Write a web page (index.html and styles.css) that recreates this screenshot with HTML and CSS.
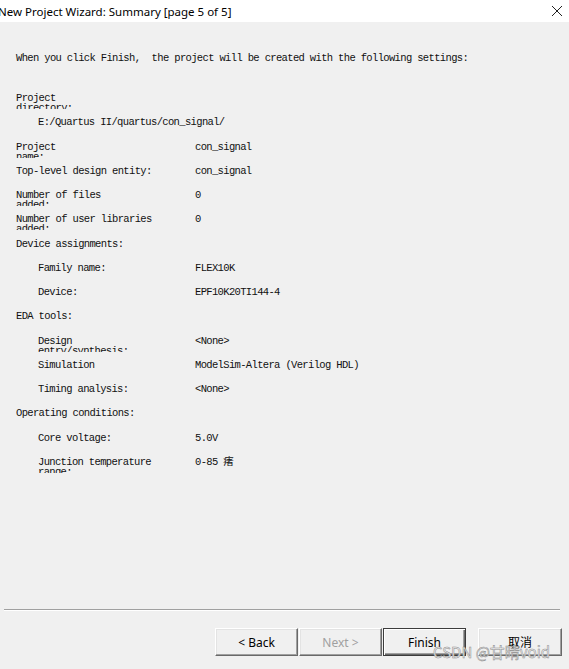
FILE: index.html
```html
<!DOCTYPE html>
<html lang="en">
<head>
    <meta charset="UTF-8">
    <meta name="viewport" content="width=device-width, initial-scale=1.0">
    <title>New Project Wizard: Summary</title>
    <link rel="stylesheet" href="styles.css">
</head>
<body>
    <div class="window">
        <header class="titlebar">
            <span class="title">New Project Wizard: Summary [page 5 of 5]</span>
            <svg class="close" width="12" height="12" viewBox="0 0 12 12">
                <path d="M1 1 L11 11 M11 1 L1 11" stroke="#222" stroke-width="1" fill="none"/>
            </svg>
        </header>

        <div class="content">
            <p class="intro">When you click Finish,  the project will be created with the following settings:</p>

            <div class="summary">
                <div class="row">
                    <div class="label">Project<br>directory:</div>
                </div>
                <div class="row sub">
                    <div class="label wide">E:/Quartus II/quartus/con_signal/</div>
                </div>
                <div class="row">
                    <div class="label">Project<br>name:</div>
                    <div class="value">con_signal</div>
                </div>
                <div class="row">
                    <div class="label">Top-level design entity:</div>
                    <div class="value">con_signal</div>
                </div>
                <div class="row">
                    <div class="label">Number of files<br>added:</div>
                    <div class="value">0</div>
                </div>
                <div class="row">
                    <div class="label">Number of user libraries<br>added:</div>
                    <div class="value">0</div>
                </div>
                <div class="row">
                    <div class="label wide">Device assignments:</div>
                </div>
                <div class="row sub">
                    <div class="label">Family name:</div>
                    <div class="value">FLEX10K</div>
                </div>
                <div class="row sub">
                    <div class="label">Device:</div>
                    <div class="value">EPF10K20TI144-4</div>
                </div>
                <div class="row">
                    <div class="label wide">EDA tools:</div>
                </div>
                <div class="row sub">
                    <div class="label">Design<br>entry/synthesis:</div>
                    <div class="value">&lt;None&gt;</div>
                </div>
                <div class="row sub">
                    <div class="label">Simulation</div>
                    <div class="value">ModelSim-Altera (Verilog HDL)</div>
                </div>
                <div class="row sub">
                    <div class="label">Timing analysis:</div>
                    <div class="value">&lt;None&gt;</div>
                </div>
                <div class="row">
                    <div class="label wide">Operating conditions:</div>
                </div>
                <div class="row sub">
                    <div class="label">Core voltage:</div>
                    <div class="value">5.0V</div>
                </div>
                <div class="row sub">
                    <div class="label">Junction temperature<br>range:</div>
                    <div class="value">0-85 瘏</div>
                </div>
            </div>
        </div>

        <footer class="footer">
            <div class="separator"></div>
            <div class="buttons">
                <button class="btn">&lt; Back</button>
                <button class="btn" disabled>Next &gt;</button>
                <button class="btn default">Finish</button>
                <button class="btn cancel">取消</button>
            </div>
            <span class="watermark">CSDN @甘晴void</span>
        </footer>
    </div>
</body>
</html>
```

FILE: styles.css
```css
body {
    margin: 0;
    padding: 0;
    background: #f0f0f0;
    font-family: "Noto Sans", "Noto Sans CJK SC", sans-serif;
    color: #000;
}

.window {
    width: 569px;
    height: 669px;
    overflow: hidden;
    position: relative;
}

.titlebar {
    height: 22px;
    background: #fff;
    display: flex;
    align-items: center;
    justify-content: space-between;
    padding-right: 6px;
}

.title {
    font-size: 11.5px;
    margin-left: -2px;
    color: #000;
}

.close {
    display: block;
    margin-top: -1px;
}

.content {
    height: 587px;
    font-family: "Liberation Mono", "Noto Sans CJK SC", monospace;
    font-size: 10.5px;
    letter-spacing: -0.65px;
    color: #111;
}

.intro {
    margin: 0;
    padding: 31px 0 0 16px;
    line-height: 10px;
    white-space: pre;
}

.summary {
    margin-top: 30px;
    padding-left: 16px;
}

.row {
    display: flex;
    height: 24.27px;
    line-height: 10px;
}

.label {
    width: 179px;
    height: 16px;
    overflow: hidden;
    flex-shrink: 0;
    box-sizing: border-box;
}

.label.wide {
    width: 400px;
    white-space: nowrap;
}

.row.sub .label {
    padding-left: 22px;
}

.value {
    white-space: nowrap;
}

.separator {
    margin: 0 9px 0 4px;
    height: 1px;
    background: #a0a0a0;
    border-bottom: 1px solid #fff;
}

.buttons {
    display: flex;
    justify-content: flex-end;
    gap: 1px;
    padding: 17px 7px 0 0;
}

.btn {
    width: 83px;
    height: 28px;
    box-sizing: border-box;
    background: #f0f0f0;
    border: 1px solid;
    border-color: #fff #696969 #696969 #fff;
    box-shadow: inset -1px -1px #a0a0a0, inset 1px 1px #e3e3e3;
    font-family: "Noto Sans", "Noto Sans CJK SC", sans-serif;
    font-size: 12px;
    color: #000;
    padding: 0;
}

.btn:disabled {
    color: #a0a0a0;
}

.btn.default {
    border-color: #3c3c3c;
    box-shadow: inset 1px 1px #fff, inset -1px -1px #696969, inset -2px -2px #a0a0a0;
}

.btn.cancel {
    width: 84px;
    margin-left: 11px;
}

.watermark {
    position: absolute;
    left: 433px;
    top: 641px;
    font-family: "Noto Sans CJK SC", sans-serif;
    font-size: 15px;
    color: #f2f2f2;
    -webkit-text-stroke: 0.5px #8a8a8a;
    letter-spacing: 0;
}
```
